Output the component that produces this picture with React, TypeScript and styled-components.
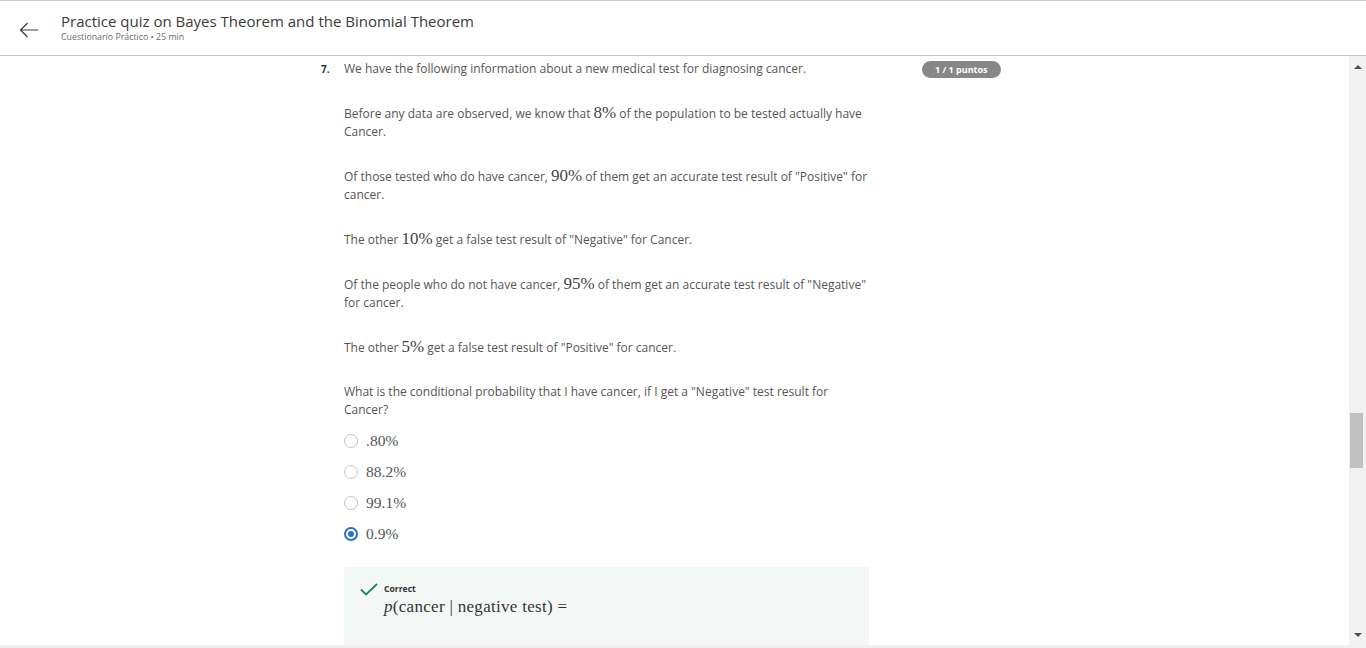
import React from "react";
import styled, { createGlobalStyle } from "styled-components";

const Global = createGlobalStyle`
  html, body { margin: 0; padding: 0; overflow: hidden; }
  body { font-family: "Open Sans", "Liberation Sans", sans-serif; background: #fff; }
`;

const Page = styled.div`
  height: 648px;
  display: flex;
  flex-direction: column;
  border-top: 1px solid #c8c8c8;
  box-sizing: border-box;
`;

const Header = styled.header`
  height: 54px;
  flex: none;
  display: flex;
  align-items: center;
  border-bottom: 1px solid #c4c4c4;
  padding-left: 19px;
  gap: 22px;
`;

const BackButton = styled.button`
  border: 0;
  background: none;
  padding: 0;
  width: 20px;
  height: 20px;
  display: flex;
  align-items: center;
  justify-content: center;
  color: #333;
  margin-top: 4px;
`;

const TitleBlock = styled.div`
  display: flex;
  flex-direction: column;
  margin-top: -2px;
`;

const Title = styled.h1`
  margin: 0;
  font-size: 15px;
  font-weight: 400;
  color: #3a3a3a;
  line-height: 20px;
`;

const Subtitle = styled.div`
  font-size: 8.8px;
  color: #6b6b6b;
  line-height: 12px;
`;

const Body = styled.div`
  flex: 1;
  display: flex;
  min-height: 0;
`;

const Scroll = styled.main`
  flex: 1;
  display: flex;
  flex-direction: column;
  overflow: hidden;
`;

const QuestionRow = styled.div`
  display: grid;
  grid-template-columns: 23px 525px 53px auto;
  padding-left: 321px;
  padding-top: 4px;
`;

const Number = styled.div`
  font-size: 10px;
  font-weight: 700;
  color: #333;
  line-height: 18px;
`;

const QuestionBody = styled.div`
  font-size: 12px;
  color: #555;
  line-height: 18px;
`;

const Para = styled.p`
  margin: 0 0 26px 0;
  &:last-of-type { margin-bottom: 13px; }
`;

const M = styled.span`
  font-family: "Liberation Serif", "Times New Roman", serif;
  font-size: 17px;
  line-height: 1;
  color: #444;
`;

const Badge = styled.div`
  justify-self: start;
  margin-top: 1px;
  height: 17px;
  padding: 0 13px;
  border-radius: 9px;
  background: #878787;
  color: #fff;
  font-size: 9px;
  font-weight: 700;
  display: flex;
  align-items: center;
  white-space: nowrap;
`;

const Options = styled.div`
  display: flex;
  flex-direction: column;
  gap: 13px;
`;

const Option = styled.label`
  display: flex;
  align-items: center;
  gap: 8px;
  height: 18px;
`;

const Radio = styled.span<{ $checked?: boolean }>`
  width: 14px;
  height: 14px;
  box-sizing: border-box;
  border-radius: 50%;
  border: ${(p) => (p.$checked ? "2px solid #2a73cc" : "1.5px solid #c4c4c4")};
  display: flex;
  align-items: center;
  justify-content: center;
  &::after {
    content: "";
    width: 6px;
    height: 6px;
    border-radius: 50%;
    background: ${(p) => (p.$checked ? "#2a73cc" : "transparent")};
  }
`;

const OptText = styled.span`
  font-family: "Liberation Serif", "Times New Roman", serif;
  font-size: 15.5px;
  color: #555;
`;

const Feedback = styled.div`
  margin-top: 24px;
  background: #f3f8f6;
  height: 90px;
  display: grid;
  grid-template-columns: 40px 1fr;
  padding-top: 16px;
`;

const CheckWrap = styled.div`
  display: flex;
  justify-content: flex-end;
  padding-right: 6px;
`;

const FeedbackLabel = styled.div`
  font-size: 8.6px;
  font-weight: 700;
  color: #333;
  line-height: 12px;
`;

const Formula = styled.div`
  font-family: "Liberation Serif", "Times New Roman", serif;
  font-size: 17px;
  letter-spacing: 0.3px;
  color: #333;
  line-height: 20px;
  margin-top: 2px;
  i { font-style: italic; }
`;

const ScrollBar = styled.div`
  width: 17px;
  background: #f1f1f1;
  display: flex;
  flex-direction: column;
  align-items: center;
`;

const Arrow = styled.div<{ $down?: boolean }>`
  width: 0;
  height: 0;
  border-left: 4px solid transparent;
  border-right: 4px solid transparent;
  ${(p) => (p.$down ? "border-top: 4px solid #505050;" : "border-bottom: 4px solid #505050;")}
  margin: ${(p) => (p.$down ? "auto 0 8px" : "9px 0 0")};
`;

const Thumb = styled.div`
  width: 13px;
  height: 55px;
  background: #c1c1c1;
  margin-top: 344px;
  align-self: flex-start;
  margin-left: 1px;
`;

const BottomStrip = styled.div`
  height: 3px;
  background: #f0f0f0;
  flex: none;
`;

export default function App() {
  return (
    <>
      <Global />
      <Page>
        <Header>
          <BackButton aria-label="Back">
            <svg width="20" height="16" viewBox="0 0 20 16" fill="none" stroke="#3a3a3a" strokeWidth="1.2">
              <path d="M19 8H1.5M8.5 1L1.5 8l7 7" />
            </svg>
          </BackButton>
          <TitleBlock>
            <Title>Practice quiz on Bayes Theorem and the Binomial Theorem</Title>
            <Subtitle>Cuestionario Práctico • 25 min</Subtitle>
          </TitleBlock>
        </Header>
        <Body>
          <Scroll>
            <QuestionRow>
              <Number>7.</Number>
              <QuestionBody>
                <Para>We have the following information about a new medical test for diagnosing cancer.</Para>
                <Para>
                  Before any data are observed, we know that <M>8%</M> of the population to be tested actually have
                  Cancer.
                </Para>
                <Para>
                  Of those tested who do have cancer, <M>90%</M> of them get an accurate test result of "Positive" for
                  cancer.
                </Para>
                <Para>
                  The other <M>10%</M> get a false test result of "Negative" for Cancer.
                </Para>
                <Para>
                  Of the people who do not have cancer, <M>95%</M> of them get an accurate test result of "Negative"
                  for cancer.
                </Para>
                <Para>
                  The other <M>5%</M> get a false test result of "Positive" for cancer.
                </Para>
                <Para>
                  What is the conditional probability that I have cancer, if I get a "Negative" test result for
                  Cancer?
                </Para>
                <Options>
                  <Option><Radio /><OptText>.80%</OptText></Option>
                  <Option><Radio /><OptText>88.2%</OptText></Option>
                  <Option><Radio /><OptText>99.1%</OptText></Option>
                  <Option><Radio $checked /><OptText>0.9%</OptText></Option>
                </Options>
                <Feedback>
                  <CheckWrap>
                    <svg width="18" height="13" viewBox="0 0 18 13" fill="none" stroke="#1f8354" strokeWidth="1.8">
                      <path d="M1 6.5l5 5L17 1" />
                    </svg>
                  </CheckWrap>
                  <div>
                    <FeedbackLabel>Correct</FeedbackLabel>
                    <Formula>
                      <i>p</i>(cancer | negative test) =
                    </Formula>
                  </div>
                </Feedback>
              </QuestionBody>
              <div />
              <Badge>1 / 1 puntos</Badge>
            </QuestionRow>
          </Scroll>
          <ScrollBar>
            <Arrow />
            <Thumb />
            <Arrow $down />
          </ScrollBar>
        </Body>
        <BottomStrip />
      </Page>
    </>
  );
}
